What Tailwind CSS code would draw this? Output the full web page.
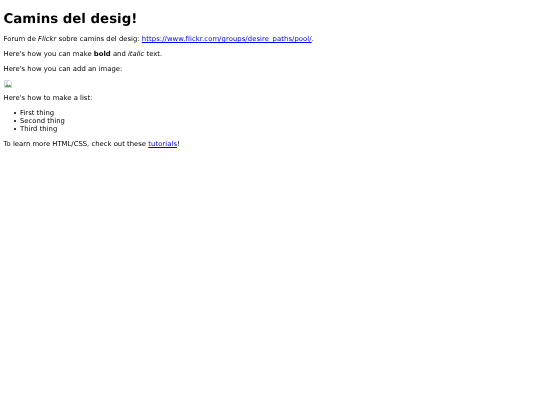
<!DOCTYPE html>
<html lang="ca">

<head>
  <meta charset="UTF-8" />
  <title>Camins del desig</title>
  <script src="https://cdn.jsdelivr.net/npm/@tailwindcss/browser@4"></script>
</head>

<body class="bg-white text-black font-['DejaVu_Sans',sans-serif] text-[6.85px] leading-[8px] px-[3.5px] pt-[11.5px] [text-rendering:geometricPrecision] blur-[0.25px]">
  <h1 class="text-[13.33px] leading-[15.5px] font-bold mb-[8px]">Camins del desig!</h1>
  <p class="mb-[6.85px]">Forum de <em>Flickr</em> sobre camins del desig: <a class="text-[#0000ee] underline tracking-[0.07px]" href="#">https://www.flickr.com/groups/desire_paths/pool/</a>.</p>
  <p class="mb-[6.85px]">Here's how you can make <strong>bold</strong> and <em>italic</em> text.</p>
  <p class="mb-[6.85px]">Here's how you can add an image:</p>
  <p class="mb-[6.85px] h-[8px]">
    <svg width="8" height="8" viewBox="0 0 16 16" class="block">
      <path d="M1 1H11L15 5V15H1Z" fill="#fff" stroke="#a9a9a9" />
      <path d="M2 13L6 8L9 11L12 9L14 12V14H2Z" fill="#5fa55a" />
      <path d="M3 3H8V7H3Z" fill="#bcd3ee" />
    </svg>
  </p>
  <p class="mb-[6.85px]">Here's how to make a list:</p>
  <ul class="pl-[16.5px] mb-[6.85px]">
    <li class="relative"><span class="absolute left-[-6.5px] top-[3px] w-[2.2px] h-[2.2px] rounded-full bg-black"></span>First thing</li>
    <li class="relative"><span class="absolute left-[-6.5px] top-[3px] w-[2.2px] h-[2.2px] rounded-full bg-black"></span>Second thing</li>
    <li class="relative"><span class="absolute left-[-6.5px] top-[3px] w-[2.2px] h-[2.2px] rounded-full bg-black"></span>Third thing</li>
  </ul>
  <p>To learn more HTML/CSS, check out these <a class="text-[#0000ee] underline tracking-[0.07px]" href="#">tutorials</a>!</p>
</body>

</html>
